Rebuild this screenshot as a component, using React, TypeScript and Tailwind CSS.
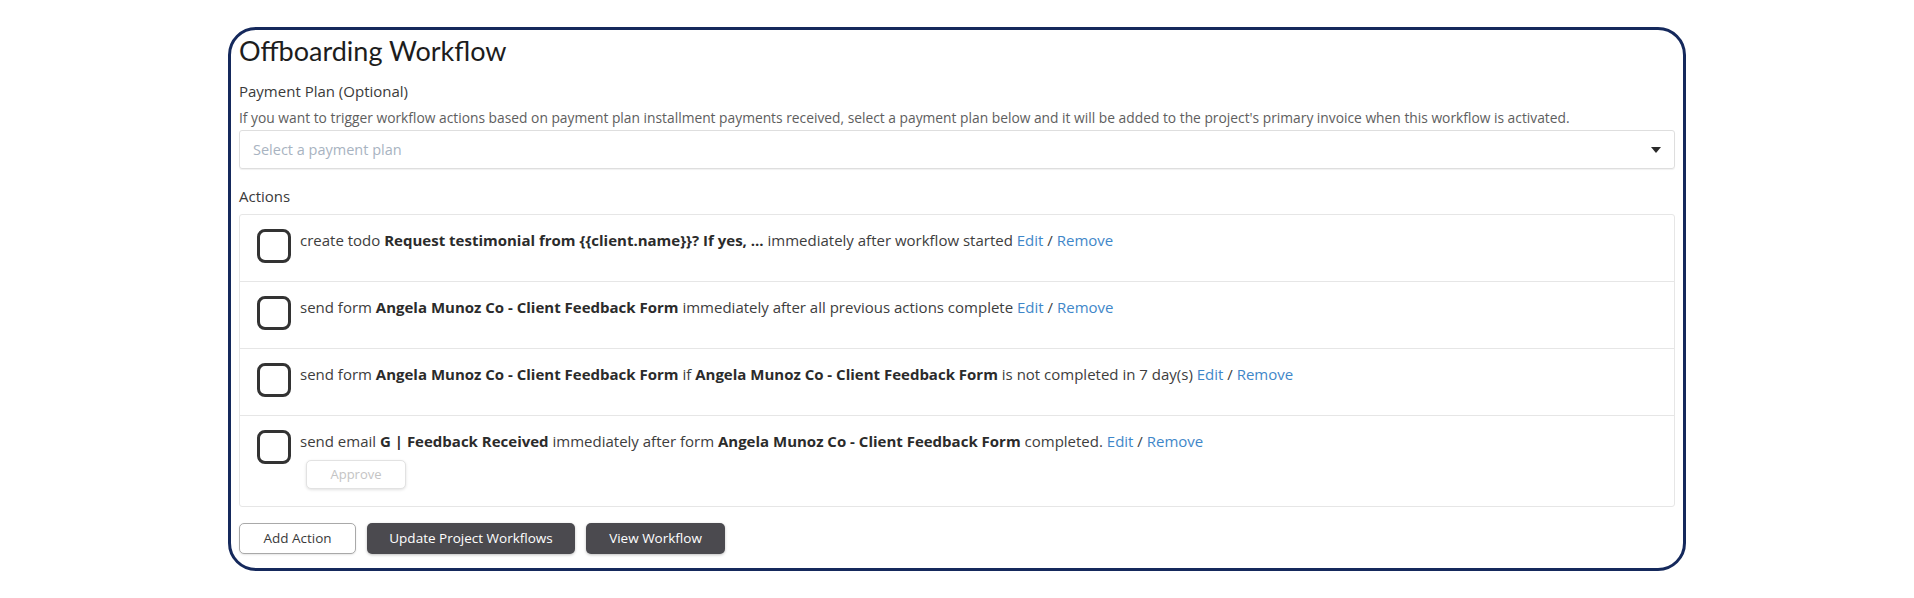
import React from 'react';

interface Part {
  text: string;
  bold?: boolean;
}

interface Action {
  parts: Part[];
  approve?: boolean;
}

const actions: Action[] = [
  {
    parts: [
      { text: 'create todo ' },
      { text: 'Request testimonial from {{client.name}}? If yes, ...', bold: true },
      { text: ' immediately after workflow started ' },
    ],
  },
  {
    parts: [
      { text: 'send form ' },
      { text: 'Angela Munoz Co - Client Feedback Form', bold: true },
      { text: ' immediately after all previous actions complete ' },
    ],
  },
  {
    parts: [
      { text: 'send form ' },
      { text: 'Angela Munoz Co - Client Feedback Form', bold: true },
      { text: ' if ' },
      { text: 'Angela Munoz Co - Client Feedback Form', bold: true },
      { text: ' is not completed in 7 day(s) ' },
    ],
  },
  {
    parts: [
      { text: 'send email ' },
      { text: 'G | Feedback Received', bold: true },
      { text: ' immediately after form ' },
      { text: 'Angela Munoz Co - Client Feedback Form', bold: true },
      { text: ' completed. ' },
    ],
    approve: true,
  },
];

const ActionRow: React.FC<{ action: Action; first: boolean }> = ({ action, first }) => (
  <div
    className={`flex items-start pl-[17px] pr-4 ${first ? 'pt-[14px] h-[66px]' : 'pt-[14px] border-t border-[#e6e6e6]'} ${
      action.approve ? 'h-[91px]' : first ? '' : 'h-[67px]'
    }`}
  >
    <div className="w-[34px] h-[34px] shrink-0 rounded-[8px] border-[3px] border-[#333333] bg-white" />
    <div className="ml-[9px] pt-[1px]">
      <div className="text-[15px] leading-[20px] text-[#3d3d3d]">
        {action.parts.map((p, i) =>
          p.bold ? (
            <span key={i} className="font-bold text-[#2b2b2b]">
              {p.text}
            </span>
          ) : (
            <span key={i}>{p.text}</span>
          )
        )}
        <a className="text-[#3f87c9] cursor-pointer">Edit</a>
        <span> / </span>
        <a className="text-[#3f87c9] cursor-pointer">Remove</a>
      </div>
      {action.approve && (
        <button className="mt-[9px] ml-[6px] w-[100px] h-[29px] rounded-[5px] border border-[#e2e2e2] bg-white text-[13px] text-[#c4c4c4] shadow-[0_1px_3px_rgba(0,0,0,0.12)]">
          Approve
        </button>
      )}
    </div>
  </div>
);

export default function App() {
  return (
    <div className="w-full min-h-[598px] bg-white pt-[27px] font-['Open_Sans',_'Liberation_Sans',_sans-serif]">
      <div className="mx-auto w-[1458px] h-[544px] rounded-[28px] border-[3px] border-[#15295c] px-[8px] pt-[5px]">
        <h1 className="font-['Lato',_sans-serif] text-[27px] leading-[32px] text-[#1d1d1d] font-normal">
          Offboarding Workflow
        </h1>

        <div className="mt-[14px] text-[15px] leading-[20px] text-[#3a3a3a]">Payment Plan (Optional)</div>
        <div className="mt-[8px] text-[13.8px] leading-[18px] text-[#5e5e5e]">
          If you want to trigger workflow actions based on payment plan installment payments received, select a payment
          plan below and it will be added to the project's primary invoice when this workflow is activated.
        </div>

        <div className="mt-[3px] h-[39px] w-[1436px] flex items-center justify-between rounded-[3px] border border-[#dedede] shadow-[0_1px_1px_rgba(0,0,0,0.06)] pl-[13px] pr-[13px]">
          <span className="text-[14.5px] text-[#a8b3c1]">Select a payment plan</span>
          <svg width="10" height="6" viewBox="0 0 10 6">
            <path d="M0 0 L10 0 L5 6 Z" fill="#2a2a2a" />
          </svg>
        </div>

        <div className="mt-[17px] text-[15px] leading-[20px] text-[#3a3a3a]">Actions</div>

        <div className="mt-[8px] w-[1436px] rounded-[3px] border border-[#e6e6e6]">
          {actions.map((a, i) => (
            <ActionRow key={i} action={a} first={i === 0} />
          ))}
        </div>

        <div className="mt-[16px] flex gap-[11px]">
          <button className="w-[117px] h-[31px] rounded-[5px] border border-[#a9a9a9] bg-white text-[13.5px] text-[#3a3a3a] shadow-[0_1px_2px_rgba(0,0,0,0.1)]">
            Add Action
          </button>
          <button className="w-[208px] h-[31px] rounded-[5px] bg-[#4b4a4f] text-[13.5px] text-white shadow-[0_1px_3px_rgba(0,0,0,0.25)]">
            Update Project Workflows
          </button>
          <button className="w-[139px] h-[31px] rounded-[5px] bg-[#4b4a4f] text-[13.5px] text-white shadow-[0_1px_3px_rgba(0,0,0,0.25)]">
            View Workflow
          </button>
        </div>
      </div>
    </div>
  );
}
